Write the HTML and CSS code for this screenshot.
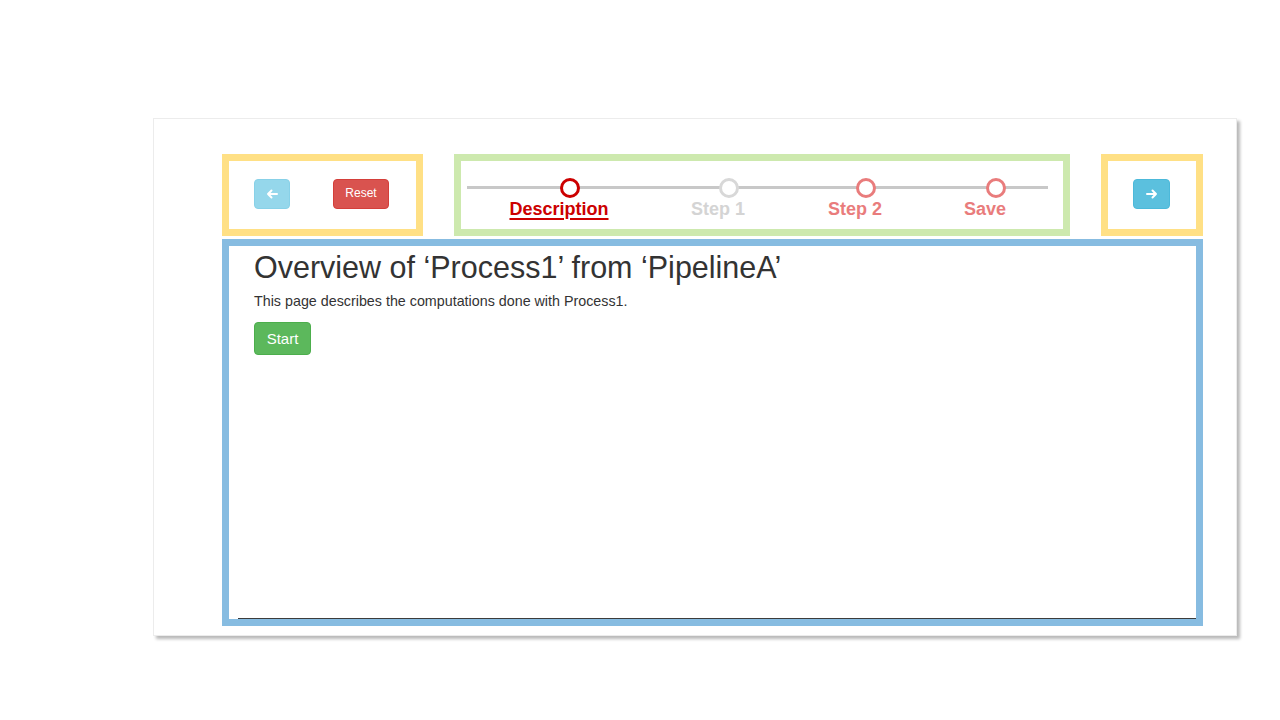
FILE: index.html
```html
<!DOCTYPE html>
<html>
<head>
<meta charset="utf-8">
<link rel="stylesheet" href="styles.css">
</head>
<body>
<div class="card">
  <div class="top-row">
    <div class="box box-yellow box-left">
      <button class="btn btn-back" aria-label="Back">
        <svg width="12" height="10" viewBox="0 0 12 10"><path d="M11 5H2M5.5 1.5L2 5l3.5 3.5" fill="none" stroke="#fff" stroke-width="2" stroke-linecap="round" stroke-linejoin="round"/></svg>
      </button>
      <button class="btn btn-reset">Reset</button>
    </div>
    <div class="box box-green box-steps">
      <div class="stepper">
        <div class="track"></div>
        <div class="step step-1 active">
          <span class="dot"></span>
          <span class="label">Description</span>
        </div>
        <div class="step step-2 muted">
          <span class="dot"></span>
          <span class="label">Step 1</span>
        </div>
        <div class="step step-3 pending">
          <span class="dot"></span>
          <span class="label">Step 2</span>
        </div>
        <div class="step step-4 pending">
          <span class="dot"></span>
          <span class="label">Save</span>
        </div>
      </div>
    </div>
    <div class="box box-yellow box-right">
      <button class="btn btn-next" aria-label="Next">
        <svg width="12" height="10" viewBox="0 0 12 10"><path d="M1 5h9M6.5 1.5L10 5 6.5 8.5" fill="none" stroke="#fff" stroke-width="2" stroke-linecap="round" stroke-linejoin="round"/></svg>
      </button>
    </div>
  </div>
  <div class="box box-blue">
    <div class="screen">
      <h1 class="title">Overview of ‘Process1’ from ‘PipelineA’</h1>
      <p class="desc">This page describes the computations done with Process1.</p>
      <button class="btn btn-start">Start</button>
    </div>
  </div>
</div>
</body>
</html>
```

FILE: styles.css
```css
html, body {
  margin: 0;
  padding: 0;
  background: #ffffff;
  font-family: "Liberation Sans", Arial, sans-serif;
}
body {
  width: 1280px;
  height: 720px;
  overflow: hidden;
}
.card {
  box-sizing: border-box;
  margin: 118px 0 0 153px;
  width: 1084px;
  height: 518px;
  border: 1px solid #ececec;
  box-shadow: 3px 3px 3px rgba(0, 0, 0, 0.28);
  padding: 35px 33px 9px 68px;
  display: flex;
  flex-direction: column;
  gap: 3px;
}
.top-row {
  display: flex;
  height: 82px;
  gap: 31px;
}
.box {
  box-sizing: border-box;
  border: 7px solid;
}
.box-yellow { border-color: #ffe085; }
.box-green { border-color: #cde9ae; }
.box-blue { border-color: #87bce1; }
.box-left {
  width: 201px;
  display: flex;
  align-items: flex-start;
  padding: 18px 0 0 25px;
  gap: 43px;
}
.box-steps {
  width: 616px;
  padding: 0 0 0 6px;
}
.box-right {
  width: 102px;
  display: flex;
  justify-content: flex-start;
  padding: 18px 0 0 25px;
}
.btn {
  box-sizing: border-box;
  border: 1px solid;
  border-radius: 4px;
  color: #fff;
  font-family: "Liberation Sans", Arial, sans-serif;
  padding: 0;
  display: flex;
  align-items: center;
  justify-content: center;
  cursor: pointer;
}
.btn-back {
  width: 36px;
  height: 30px;
  background: #95d7eb;
  border-color: #88d1e8;
}
.btn-next {
  width: 37px;
  height: 30px;
  background: #5bc0de;
  border-color: #4cb9da;
}
.btn-reset {
  width: 56px;
  height: 30px;
  background: #d9534f;
  border-color: #d43f3a;
  font-size: 12px;
  padding-bottom: 2px;
}
.stepper {
  position: relative;
  display: flex;
  width: 581px;
  padding-top: 17px;
  height: 100%;
  box-sizing: border-box;
}
.track {
  position: absolute;
  left: 0;
  right: 0;
  top: 25px;
  height: 3px;
  background: #c8c8c8;
}
.step {
  position: relative;
  width: 120px;
  display: flex;
  flex-direction: column;
  align-items: center;
}
.step-1 { margin-left: 32px; }
.step-2 { margin-left: 39px; }
.step-3 { margin-left: 17px; }
.step-4 { margin-left: 10px; }
.dot {
  box-sizing: border-box;
  width: 20px;
  height: 20px;
  border-radius: 50%;
  border: 3px solid;
  background: #fff;
  margin-left: 21px;
}
.label {
  font-size: 18px;
  font-weight: bold;
  line-height: 20px;
  margin-top: 1px;
  white-space: nowrap;
}
.active .dot { border-color: #cc0000; }
.active .label {
  color: #cc0000;
  text-decoration: underline;
  text-decoration-thickness: 2px;
  text-underline-offset: 3px;
}
.muted .dot { border-color: #d8d8d8; }
.muted .label { color: #d4d4d4; }
.pending .dot { border-color: #e97c7c; }
.pending .label { color: #e97c7c; }
.box-blue {
  flex: 1;
  display: flex;
  flex-direction: column;
}
.screen {
  flex: 1;
  margin-left: 9px;
  border-bottom: 1px solid #3c3c3c;
  padding: 4px 0 0 16px;
  color: #333;
}
.title {
  margin: 0;
  font-size: 30.5px;
  font-weight: normal;
  line-height: 34px;
  color: #333;
}
.desc {
  margin: 7px 0 11px 0;
  font-size: 14.3px;
  line-height: 20px;
  color: #333;
}
.btn-start {
  width: 57px;
  height: 33px;
  background: #5cb85c;
  border-color: #4cae4c;
  font-size: 15px;
  padding-bottom: 1px;
}
```
